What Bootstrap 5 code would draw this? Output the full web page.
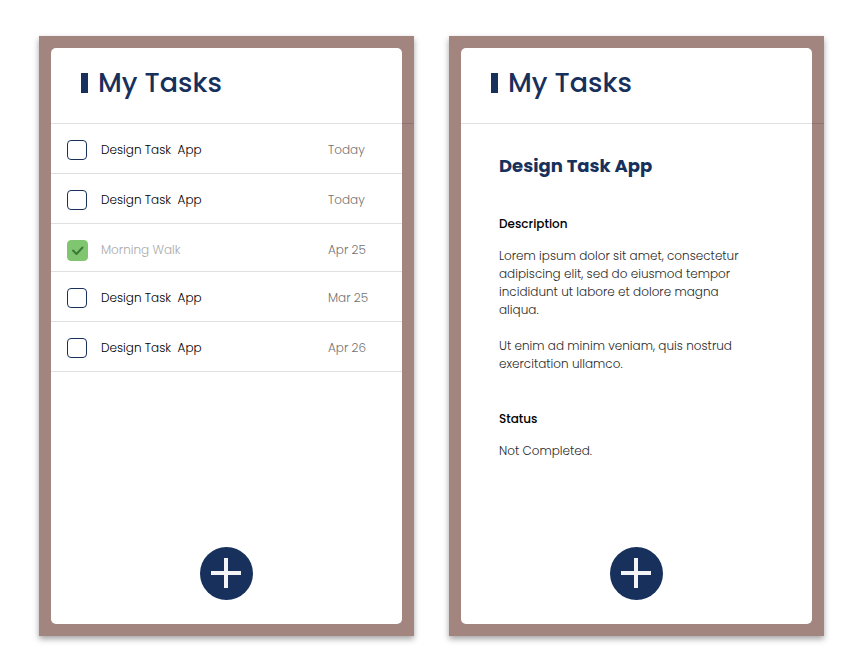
<!DOCTYPE html>
<html lang="en">
<head>
<meta charset="utf-8">
<meta name="viewport" content="width=device-width, initial-scale=1">
<title>My Tasks</title>
<link href="https://cdn.jsdelivr.net/npm/bootstrap@5.3.0/dist/css/bootstrap.min.css" rel="stylesheet">
<style>
  :root { --navy: #17315c; --frame: #a1857e; --line: rgba(0, 0, 0, .12); }
  body { font-family: Poppins, Inter, "Open Sans", sans-serif; font-size: 12px; line-height: 18px; color: #000; background: #fff; }
  .board { min-height: 100vh; padding: 36px 32px 34px 39px; gap: 35px; }
  .phone { flex: 1 1 300px; padding: 12px; background: var(--frame); box-shadow: 0 3px 6px rgba(0, 0, 0, .36); }
  .screen { border-radius: 5px; }
  /* the rule under the header runs on across the right side of the frame */
  .screen-header { height: 76px; padding: 0 30px 6px; margin-right: -12px; gap: 10px; border-bottom: 1px solid var(--line); }
  .title-bar { width: 7px; height: 20px; background: var(--navy); }
  .screen-title { font-size: 27px; line-height: 36px; font-weight: 500; color: var(--navy); }
  .task { height: 50px; padding: 16px 0 0 16px; gap: 14px; border-bottom: 1px solid var(--line); }
  .task-done { height: 48px; gap: 13px; }
  .task .form-check-input { width: 20px; height: 20px; border: 1px solid var(--navy); border-radius: 4px; }
  .task .form-check-input:checked { width: 21px; height: 21px; border-color: #80c671; background-color: #80c671; background-size: 21px 21px;
    background-image: url("data:image/svg+xml,%3csvg xmlns='http://www.w3.org/2000/svg' viewBox='0 0 21 21'%3e%3cpath fill='none' stroke='%233b7a35' stroke-width='2' stroke-linecap='round' stroke-linejoin='round' d='M6 10.500l3.500 3.500 6-6.500'/%3e%3c/svg%3e"); }
  .task-name, .task-date { line-height: 20px; font-weight: 300; }
  .task-name { white-space: pre; }
  .task-date { width: 74px; color: #737373; }
  .task-done .task-name { color: #aaa; }
  .detail { padding: 30px 60px 30px 38px; }
  .detail-title { font-size: 18px; line-height: 24px; font-weight: 700; color: var(--navy); margin-bottom: 37px; }
  .detail-label { font-size: 12px; line-height: 18px; font-weight: 500; color: #000; margin-bottom: 14px; }
  .detail-text { font-weight: 300; color: #2a2a2a; margin-bottom: 18px; }
  .detail-gap { margin-bottom: 37px; }
  .add-btn { width: 53px; height: 53px; margin-bottom: 24px; background: var(--navy); }
  .add-btn:hover { background: #20427a; }
</style>
</head>
<body>
<main class="board d-flex flex-wrap">
  <section class="phone d-flex" aria-label="Task list">
    <div class="screen d-flex flex-column flex-fill bg-white">
      <header class="screen-header d-flex align-items-center">
        <span class="title-bar"></span>
        <h1 class="screen-title m-0">My Tasks</h1>
      </header>
      <ul class="list-unstyled m-0">
        <li class="task d-flex align-items-start">
          <input class="form-check-input m-0 flex-shrink-0" type="checkbox" id="task1">
          <label class="task-name flex-fill" for="task1">Design Task  App</label>
          <span class="task-date">Today</span>
        </li>
        <li class="task d-flex align-items-start">
          <input class="form-check-input m-0 flex-shrink-0" type="checkbox" id="task2">
          <label class="task-name flex-fill" for="task2">Design Task  App</label>
          <span class="task-date">Today</span>
        </li>
        <li class="task task-done d-flex align-items-start">
          <input class="form-check-input m-0 flex-shrink-0" type="checkbox" id="task3" checked>
          <label class="task-name flex-fill" for="task3">Morning Walk</label>
          <span class="task-date">Apr 25</span>
        </li>
        <li class="task d-flex align-items-start">
          <input class="form-check-input m-0 flex-shrink-0" type="checkbox" id="task4">
          <label class="task-name flex-fill" for="task4">Design Task  App</label>
          <span class="task-date">Mar 25</span>
        </li>
        <li class="task d-flex align-items-start">
          <input class="form-check-input m-0 flex-shrink-0" type="checkbox" id="task5">
          <label class="task-name flex-fill" for="task5">Design Task  App</label>
          <span class="task-date">Apr 26</span>
        </li>
      </ul>
      <button class="add-btn border-0 rounded-circle p-0 d-flex align-items-center justify-content-center mt-auto mx-auto" type="button" aria-label="Add task">
        <svg width="31" height="31" viewBox="0 0 31 31" aria-hidden="true"><path d="M15 0v30M0 15h30" stroke="#f4f4f8" stroke-width="4"/></svg>
      </button>
    </div>
  </section>

  <section class="phone d-flex" aria-label="Task details">
    <div class="screen d-flex flex-column flex-fill bg-white">
      <header class="screen-header d-flex align-items-center">
        <span class="title-bar"></span>
        <h1 class="screen-title m-0">My Tasks</h1>
      </header>
      <article class="detail">
        <h2 class="detail-title">Design Task App</h2>
        <h3 class="detail-label">Description</h3>
        <p class="detail-text">Lorem ipsum dolor sit amet, consectetur adipiscing elit, sed do eiusmod tempor incididunt ut labore et dolore magna aliqua.</p>
        <p class="detail-text detail-gap">Ut enim ad minim veniam, quis nostrud exercitation ullamco.</p>
        <h3 class="detail-label">Status</h3>
        <p class="detail-text m-0">Not Completed.</p>
      </article>
      <button class="add-btn border-0 rounded-circle p-0 d-flex align-items-center justify-content-center mt-auto mx-auto" type="button" aria-label="Add task">
        <svg width="31" height="31" viewBox="0 0 31 31" aria-hidden="true"><path d="M15 0v30M0 15h30" stroke="#f4f4f8" stroke-width="4"/></svg>
      </button>
    </div>
  </section>
</main>
<script src="https://cdn.jsdelivr.net/npm/bootstrap@5.3.0/dist/js/bootstrap.bundle.min.js"></script>
</body>
</html>
